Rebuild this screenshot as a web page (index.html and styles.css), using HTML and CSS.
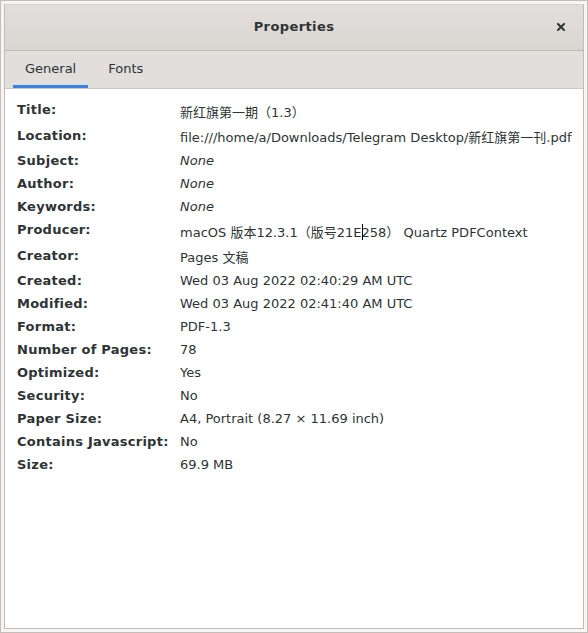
FILE: index.html
```html
<!DOCTYPE html>
<html lang="en">
<head>
<meta charset="utf-8">
<title>Properties</title>
<link rel="stylesheet" href="styles.css">
</head>
<body>
<div class="screen">
  <div class="window">
    <header class="titlebar">
      <span class="spacer"></span>
      <h1 class="title">Properties</h1>
      <button class="close" aria-label="Close">
        <svg width="8" height="8" viewBox="0 0 8 8"><path d="M1 1 L7 7 M7 1 L1 7" stroke="#2e3436" stroke-width="2" stroke-linecap="square"/></svg>
      </button>
    </header>
    <nav class="tabs">
      <div class="tab active">General</div>
      <div class="tab">Fonts</div>
    </nav>
    <main class="content">
      <div class="props">
        <div class="lbl">Title:</div><div class="val cjk">新红旗第一期（1.3）</div>
        <div class="lbl">Location:</div><div class="val cjk">file:///home/a/Downloads/Telegram Desktop/新红旗第一刊.pdf</div>
        <div class="lbl">Subject:</div><div class="val none">None</div>
        <div class="lbl">Author:</div><div class="val none">None</div>
        <div class="lbl">Keywords:</div><div class="val none">None</div>
        <div class="lbl">Producer:</div><div class="val cjk">macOS 版本12.3.1（版号21E<span class="caret"></span>258） Quartz PDFContext</div>
        <div class="lbl">Creator:</div><div class="val cjk">Pages 文稿</div>
        <div class="lbl">Created:</div><div class="val">Wed 03 Aug 2022 02:40:29 AM UTC</div>
        <div class="lbl">Modified:</div><div class="val">Wed 03 Aug 2022 02:41:40 AM UTC</div>
        <div class="lbl">Format:</div><div class="val">PDF-1.3</div>
        <div class="lbl">Number of Pages:</div><div class="val">78</div>
        <div class="lbl">Optimized:</div><div class="val">Yes</div>
        <div class="lbl">Security:</div><div class="val">No</div>
        <div class="lbl">Paper Size:</div><div class="val">A4, Portrait (8.27 × 11.69 inch)</div>
        <div class="lbl">Contains Javascript:</div><div class="val">No</div>
        <div class="lbl">Size:</div><div class="val">69.9 MB</div>
      </div>
    </main>
  </div>
</div>
</body>
</html>
```
FILE: styles.css
```css
* { box-sizing: border-box; }
html, body { margin: 0; padding: 0; }
body {
  font-family: "DejaVu Sans", "Noto Sans CJK SC", sans-serif;
  font-size: 13px;
  color: #2e3436;
  background: #f6f5f4;
}
.screen {
  width: 588px;
  height: 633px;
  border: 1px solid #c3bfb8;
  padding: 3px;
  background: #f6f5f4;
}
.window {
  height: 100%;
  border: 1px solid #c0bcb5;
  border-top-color: #d6d2cd;
  display: flex;
  flex-direction: column;
  background: #ffffff;
}
.titlebar {
  height: 46px;
  flex: none;
  display: grid;
  grid-template-columns: 1fr auto 1fr;
  align-items: center;
  background: linear-gradient(#e1dedb, #dad6d2);
  border-bottom: 1px solid #bfb8b1;
}
.title {
  margin: 0 0 2px;
  font-size: 13px;
  font-weight: bold;
  letter-spacing: 0.4px;
  color: #2e3436;
}
.close {
  justify-self: end;
  width: 34px;
  height: 34px;
  margin-right: 5px;
  margin-bottom: 1px;
  border: 0;
  background: transparent;
  padding: 0;
  display: flex;
  align-items: center;
  justify-content: center;
}
.close svg { display: block; }
.tabs {
  flex: none;
  height: 38px;
  display: flex;
  gap: 8px;
  padding: 0 8px;
  background: #e1dedb;
  border-bottom: 1px solid #cdc7c2;
}
.tab {
  padding: 1px 12px 0;
  display: flex;
  align-items: center;
  color: #2e3436;
  border-bottom: 3px solid transparent;
}
.tab.active {
  border-bottom-color: #3584e4;
}
.content {
  flex: 1;
  background: #ffffff;
  padding: 12px 12px 0 12px;
}
.props {
  display: grid;
  grid-template-columns: 163px 1fr;
  row-gap: 6px;
  align-items: start;
  line-height: 17px;
}
.lbl {
  font-weight: bold;
  letter-spacing: 0.25px;
  white-space: nowrap;
}
.val {
  white-space: nowrap;
}
.val.cjk {
  padding-top: 2.5px;
}
.val.none {
  font-style: italic;
}
.caret {
  position: relative;
  display: inline-block;
  width: 0;
  height: 0;
}
.caret::after {
  content: "";
  position: absolute;
  left: 0;
  top: -13px;
  width: 1px;
  height: 16px;
  background: #000000;
}
```
